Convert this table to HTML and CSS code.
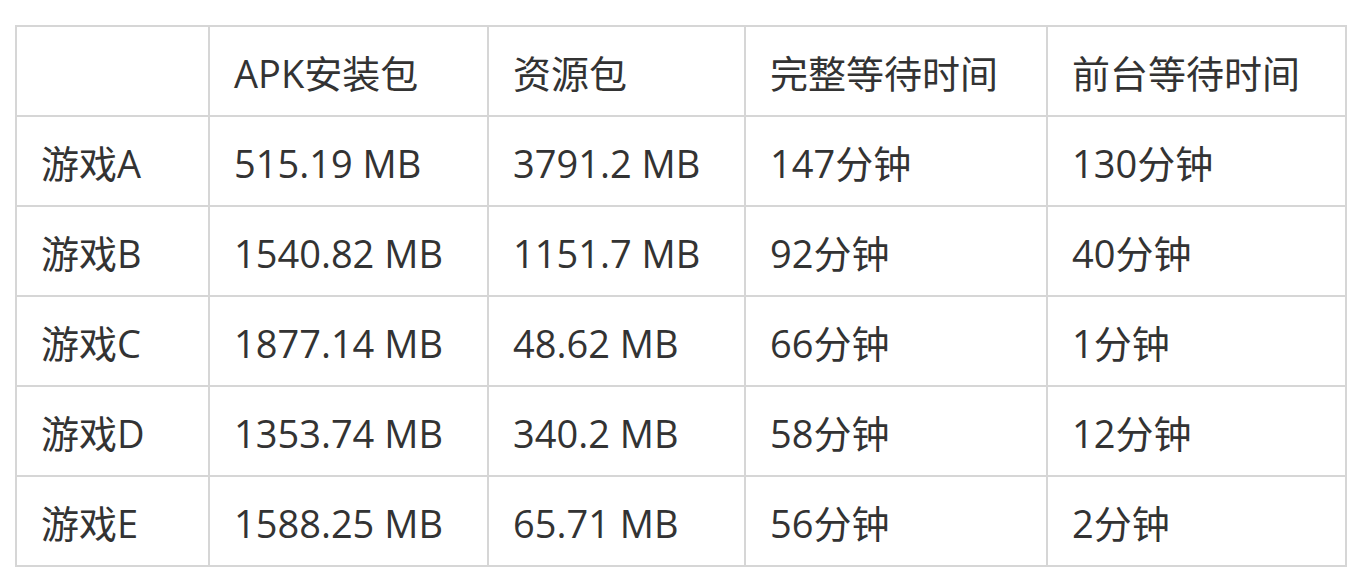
FILE: index.html
```html
<!DOCTYPE html>
<html lang="zh-CN">
<head>
    <meta charset="UTF-8">
    <title>下载等待时间</title>
    <link rel="stylesheet" href="styles.css">
</head>
<body>
    <table class="size-table">
        <colgroup>
            <col class="col-name">
            <col class="col-apk">
            <col class="col-res">
            <col class="col-full">
            <col class="col-front">
        </colgroup>
        <tr>
            <td></td>
            <td>APK安装包</td>
            <td>资源包</td>
            <td>完整等待时间</td>
            <td>前台等待时间</td>
        </tr>
        <tr>
            <td>游戏A</td>
            <td>515.19 MB</td>
            <td>3791.2 MB</td>
            <td>147分钟</td>
            <td>130分钟</td>
        </tr>
        <tr>
            <td>游戏B</td>
            <td>1540.82 MB</td>
            <td>1151.7 MB</td>
            <td>92分钟</td>
            <td>40分钟</td>
        </tr>
        <tr>
            <td>游戏C</td>
            <td>1877.14 MB</td>
            <td>48.62 MB</td>
            <td>66分钟</td>
            <td>1分钟</td>
        </tr>
        <tr>
            <td>游戏D</td>
            <td>1353.74 MB</td>
            <td>340.2 MB</td>
            <td>58分钟</td>
            <td>12分钟</td>
        </tr>
        <tr>
            <td>游戏E</td>
            <td>1588.25 MB</td>
            <td>65.71 MB</td>
            <td>56分钟</td>
            <td>2分钟</td>
        </tr>
    </table>
</body>
</html>
```

FILE: styles.css
```css
body {
    margin: 0;
    padding: 25px 15px;
    background: #ffffff;
    color: #333333;
    font-family: "Open Sans", "Noto Sans CJK SC", sans-serif;
}

/* Table */
.size-table {
    width: 1332px;
    border-collapse: collapse;
    table-layout: fixed;
    font-size: 38px;
    line-height: 44px;
}

.size-table td {
    height: 84px;
    padding: 4px 0 0 24px;
    border: 2px solid #d6d6d6;
    vertical-align: middle;
    white-space: nowrap;
}

.col-name { width: 193px; }
.col-apk { width: 279px; }
.col-res { width: 257px; }
.col-full { width: 302px; }
.col-front { width: 299px; }
```
